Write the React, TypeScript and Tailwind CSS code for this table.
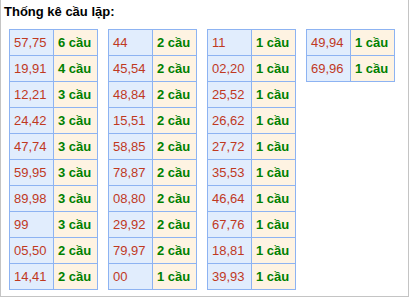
const tables: [string, number][][] = [
  [
    ["57,75", 6],
    ["19,91", 4],
    ["12,21", 3],
    ["24,42", 3],
    ["47,74", 3],
    ["59,95", 3],
    ["89,98", 3],
    ["99", 3],
    ["05,50", 2],
    ["14,41", 2],
  ],
  [
    ["44", 2],
    ["45,54", 2],
    ["48,84", 2],
    ["15,51", 2],
    ["58,85", 2],
    ["78,87", 2],
    ["08,80", 2],
    ["29,92", 2],
    ["79,97", 2],
    ["00", 1],
  ],
  [
    ["11", 1],
    ["02,20", 1],
    ["25,52", 1],
    ["26,62", 1],
    ["27,72", 1],
    ["35,53", 1],
    ["46,64", 1],
    ["67,76", 1],
    ["18,81", 1],
    ["39,93", 1],
  ],
  [
    ["49,94", 1],
    ["69,96", 1],
  ],
];

export default function App() {
  return (
    <div
      className="h-[297px] w-[409px] border border-t-0 border-[#c4c4c4] bg-white"
      style={{ fontFamily: '"Liberation Sans", Arial, sans-serif' }}
    >
      <p className="pl-[3px] pt-[4px] text-[13px] font-bold leading-[16px] text-black">
        Thống kê cầu lặp:
      </p>
      <div className="mt-[9px] flex items-start gap-[10px] pl-[8px]">
        {tables.map((rows, i) => (
          <table className="border-collapse text-[13px] leading-[15px]" key={i}>
            <tbody>
              {rows.map(([pair, count]) => (
                <tr className="h-[26px]" key={pair}>
                  <td className="w-[44px] border border-[#8db3f2] bg-[#e1edfd] pl-[4px] text-[#c0391f]">
                    {pair}
                  </td>
                  <td className="w-[44px] border border-[#8db3f2] bg-[#fef3e2] pl-[4px] font-bold text-[#008000]">
                    {count} cầu
                  </td>
                </tr>
              ))}
            </tbody>
          </table>
        ))}
      </div>
    </div>
  );
}
